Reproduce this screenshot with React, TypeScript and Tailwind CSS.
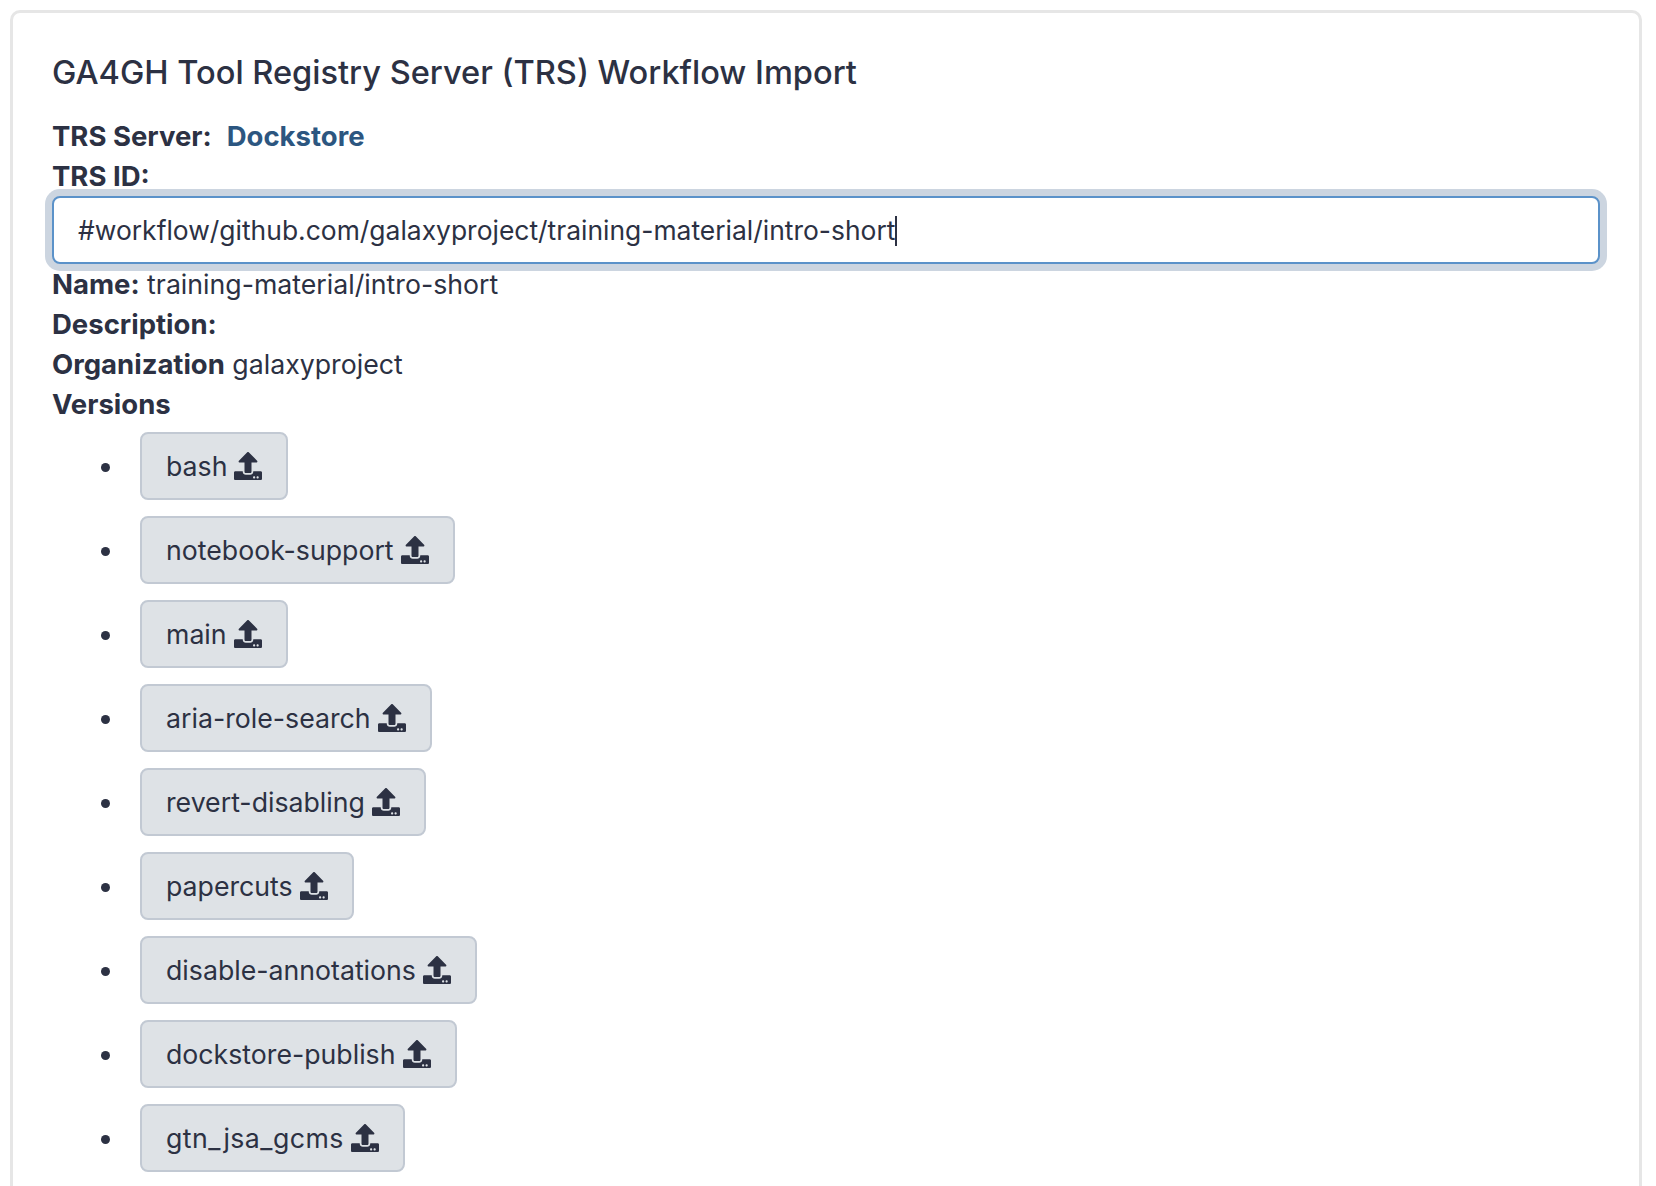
import { FaUpload } from 'react-icons/fa'

const VERSIONS = [
  'bash',
  'notebook-support',
  'main',
  'aria-role-search',
  'revert-disabling',
  'papercuts',
  'disable-annotations',
  'dockstore-publish',
  'gtn_jsa_gcms',
]

const VersionButton = ({ name }: { name: string }) => (
  <button
    type="button"
    className="ml-[15px] inline-flex h-[68px] items-center gap-[7px] rounded-[8px] border-2 border-[#c2c9d3] bg-[#dee2e6] px-[24px] text-[#2c3143]"
  >
    <span className={name === 'gtn_jsa_gcms' ? 'tracking-[0.45px]' : ''}>{name}</span>
    <FaUpload size={28} />
  </button>
)

export default function App() {
  return (
    <div className="h-[1186px] overflow-hidden bg-white pt-[10px] pr-[14px] pl-[10px] font-['Inter',sans-serif] text-[26.7px] leading-[40px] text-[#2c3143]">
      <div className="h-[1300px] rounded-[10px] border-[3px] border-[#e6e6e6] pt-[35px] pr-[39px] pl-[39px]">
        <h4 className="mb-[20px] text-[32.6px] leading-[48px] font-medium">GA4GH Tool Registry Server (TRS) Workflow Import</h4>
        <div>
          <b className="text-[27.5px] font-bold">TRS Server:</b>
          <a href="#dockstore" className="ml-[15px] text-[27.5px] font-bold text-[#2c5680]">
            Dockstore
          </a>
        </div>
        <div className="text-[27.5px] font-bold">TRS ID:</div>
        <div className="h-[68px] rounded-[8px] border-2 border-[#5b92c9] bg-white px-[24px] text-[26.45px] leading-[64px] shadow-[0_0_0_7px_#ccd5e0]">
          #workflow/github.com/galaxyproject/training-material/intro-short
          <span className="inline-block h-[30px] w-[2px] translate-y-[6px] bg-[#2c3143]" />
        </div>
        <div>
          <b className="text-[27.5px] font-bold">Name:</b> training-material/intro-short
        </div>
        <div className="text-[27.5px] font-bold">Description:</div>
        <div>
          <b className="text-[27.5px] font-bold">Organization</b> galaxyproject
        </div>
        <div className="text-[27.5px] font-bold">Versions</div>
        <ul className="list-disc pl-[73px]">
          {VERSIONS.map((name) => (
            <li key={name} className="mt-[8px] mb-[16px]">
              <VersionButton name={name} />
            </li>
          ))}
        </ul>
      </div>
    </div>
  )
}
